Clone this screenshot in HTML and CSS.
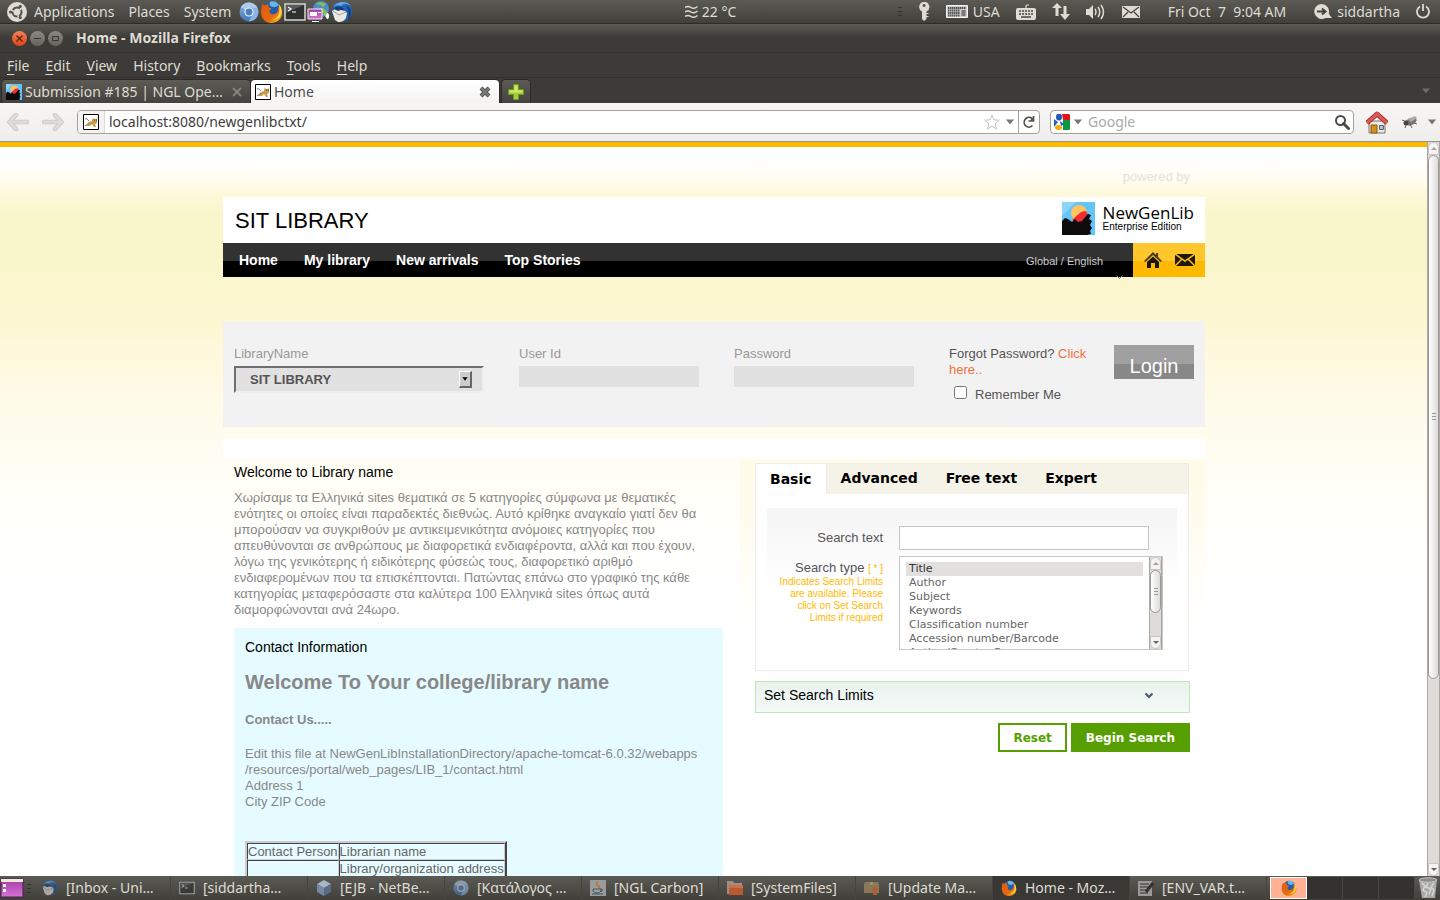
FILE: index.html
```html
<!DOCTYPE html>
<html lang="en">
<head>
	<meta charset="utf-8">
	<title>Home - Mozilla Firefox</title>
	<link rel="stylesheet" href="styles.css">
</head>
<body>

	<!-- icons used more than once -->
	<svg class="defs" aria-hidden="true">
		<defs>
			<linearGradient id="gBlue" x1="0" y1="0" x2="0" y2="1"><stop offset="0" stop-color="#8fb8e6"/><stop offset="1" stop-color="#3f73b4"/></linearGradient>
			<linearGradient id="gFox" x1="0" y1="0" x2="1" y2="1"><stop offset="0" stop-color="#e25a10"/><stop offset="0.6" stop-color="#e66a0c"/><stop offset="1" stop-color="#ffc928"/></linearGradient>
			<linearGradient id="gPurple" x1="0" y1="0" x2="0" y2="1"><stop offset="0" stop-color="#a43aa5"/><stop offset="1" stop-color="#d774d6"/></linearGradient>
		</defs>
		<symbol id="chromium" viewBox="0 0 20 20">
			<circle cx="10" cy="10" r="9.5" fill="url(#gBlue)"/>
			<path d="M10 10L1.8 5.2A9.5 9.5 0 0 1 18.6 6.2L10 5.6z" fill="#aecbee"/>
			<path d="M14 12.2L9.6 19.4A9.5 9.5 0 0 0 18.6 6.2H11z" fill="#8fb5e2"/>
			<circle cx="10" cy="10" r="4.6" fill="#e9f1fa"/>
			<circle cx="10" cy="10" r="3.4" fill="#4c7fc0"/>
		</symbol>
		<symbol id="firefox" viewBox="0 0 22 22">
			<circle cx="11.500" cy="9.500" r="8.500" fill="#1d5fae"/>
			<path d="M9 2c4-2 8 0 9 3l-4 2-4-1z" fill="#67b6ea"/>
			<path d="M3 3c0 1 .5 2 1 2.500C5.500 4 7 4 8.500 4.500 7.500 5.500 8 7 9 7.500l2 .5-2 2.500c0 3 3.500 4 6 2.500 2-1 3-4 2-7 3 2 4.500 5 4.200 7.500C20.500 19 16 22 11 22 5 22 1 17.500 1 12 1 8 1.500 5 3 3z" fill="url(#gFox)"/>
			<path d="M18 4c3 3 3.500 7 2 10-1 3-4 5-8 5 5-1 8-6 6-15z" fill="#ffd84a"/>
		</symbol>
		<symbol id="terminal" viewBox="0 0 22 18">
			<path d="M1 1h20v16H1z" fill="#2d3130" stroke="#d5d5d0" stroke-width="1.500"/>
			<path d="M2 2h18L2 10z" fill="#56595a"/>
			<path d="M4 4l3 2-3 2M8 9h4" fill="none" stroke="#fff" stroke-width="1.200"/>
		</symbol>
		<symbol id="thunderbird" viewBox="0 0 22 22">
			<circle cx="11" cy="10.500" r="10" fill="#2263b4"/>
			<path d="M2 6C6 0 16-1 20 5c-5-3-8-2-10 0-4-1-6 0-8 1z" fill="#62a6e4"/>
			<path d="M15 5c6 1 6 9 2 14 1-6 1-10-2-14z" fill="#123d7e"/>
			<path d="M1 10l5-3 6 1 4 4-1 5c-3 5-8 5-11 2z" fill="#ece8e2"/>
			<path d="M2 10l6 4 7-3" fill="none" stroke="#a49d94"/>
			<path d="M3 8c2-3 6-3 9-1l2 3-4-1-3 1z" fill="#193f77"/>
		</symbol>
		<symbol id="sunset" viewBox="0 0 33 33">
			<path d="M0 0h33v33H0z" fill="#62c4f8"/>
			<path d="M0 0h14L0 14z" fill="#8dd4fa"/>
			<circle cx="17" cy="11" r="8" fill="#fdc45f"/>
			<path d="M10 18l9-8 5-1 2 4-3 6c-4 2-9 2-13-1z" fill="#f22b35"/>
			<path d="M0 33V19l3-3 3 1 4 3 3-3 3 3 4-1 4-5 2-2 3 1-2 4 3 2-2 4 2 3-2 3 1 3-4 1z" fill="#0d0b0c"/>
		</symbol>
		<symbol id="tomcat" viewBox="0 0 16 16">
			<path d="M.5.5h15v15H.5z" fill="#fff" stroke="#000"/>
			<path d="M3 12l3-4 3-1 .5-3L11 5h2l1-1v5l-2 1 1 3h-2l-2-3-2 2z" fill="#c99b4a"/>
			<path d="M2 5c2-1 3 1 4 2M2 12l4-3" fill="none" stroke="#777"/>
			<path d="M11 6h1M13 6h1" stroke="#4d3510" fill="none"/>
		</symbol>
		<symbol id="down" viewBox="0 0 8 6"><path d="M0 .5h8L4 5.500z" fill="currentColor"/></symbol>
	</svg>

	<!-- desktop panel -->
	<header class="panel">
		<div class="panel-left">
			<svg width="20" height="20" viewBox="0 0 20 20"><circle cx="10" cy="10" r="10" fill="#dfdbd2"/><circle cx="10" cy="10" r="4.500" fill="none" stroke="#55534d" stroke-width="2" stroke-dasharray="7.900 1.500" stroke-dashoffset="3"/><g fill="#55534d"><circle cx="3.600" cy="10" r="1.600"/><circle cx="13.200" cy="4.400" r="1.600"/><circle cx="13.200" cy="15.600" r="1.600"/></g></svg>
			<nav class="panel-menu">
				<a href="#">Applications</a>
				<a href="#">Places</a>
				<a href="#">System</a>
			</nav>
			<div class="launchers">
				<svg width="20" height="20"><use href="#chromium"/></svg>
				<svg width="23" height="23"><use href="#firefox"/></svg>
				<svg width="22" height="18"><use href="#terminal"/></svg>
				<svg width="23" height="22" viewBox="0 0 23 22"><circle cx="14" cy="8" r="8" fill="#4d8dcc"/><path d="M9 3c4-3 8-1 10 0l-3 3-2-2zM11 8l5-1 4 4-2 4z" fill="#8fc04a"/><path d="M1 8h14v10H1z" fill="url(#gPurple)" stroke="#eee"/><path d="M3 11h7v4H3zM11 11h3v1h-3zM5 20h7v1H5z" fill="#fff"/><path d="M20 12l-2 3 2 3c2 0 2-2 2-3s0-3-2-3z" fill="#fff"/></svg>
				<svg width="22" height="22"><use href="#thunderbird"/></svg>
			</div>
		</div>
		<div class="weather">
			<svg width="13" height="13" viewBox="0 0 13 13"><path d="M0 2.500q3-2 6 0t6.500-1M0 7q3-2 6 0t6.500-1M0 11.500q3-2 6 0t6.500-1" fill="none" stroke="#dfdbd2" stroke-width="1.500"/></svg>
			22 °C
		</div>
		<div class="panel-right">
			<i class="grip"></i>
			<svg width="12" height="19" viewBox="0 0 12 19"><path d="M6 0a5 5 0 0 1 2.500 9.500V11h2v1h-2v2h2v1h-2v2L6 19l-2-2V9.500A5 5 0 0 1 6 0zm0 2a1.500 1.500 0 1 0 .1 0z" fill="#dfdbd2"/></svg>
			<span class="layout">
				<svg width="22" height="14" viewBox="0 0 22 14"><path d="M.5.5h21v12H.5z" fill="#ccc" stroke="#f4f4f2"/><path d="M2 3h18M2 5.500h12M2 8h12M2 10.500h12" stroke="#565656" stroke-width="2" stroke-dasharray="1.500 .5"/><path d="M15.500 5h4v6h-4z" fill="#777"/></svg>
				USA
			</span>
			<svg width="20" height="16" viewBox="0 0 20 16"><path d="M10 4V2q0-1 1.500-1H13" fill="none" stroke="#dfdbd2" stroke-width="1.200"/><rect y="4" width="20" height="12" rx="2" fill="#dfdbd2"/><path d="M3 7h14M3 10h14" stroke="#484743" stroke-width="1.600" stroke-dasharray="2 1"/><path d="M5 13h10" stroke="#484743" stroke-width="1.500"/></svg>
			<svg width="18" height="17" viewBox="0 0 18 17"><path d="M3.500 13V5H0l5-5 5 5H6.500v8zM11.500 3v8H8l5 6 5-6h-3.500V3z" fill="#dfdbd2"/></svg>
			<svg width="20" height="16" viewBox="0 0 20 16"><path d="M0 5h3l4-4v14l-4-4H0z" fill="#dfdbd2"/><path d="M9 5q2 3 0 6M12 3q3.500 5 0 10M15 1q5 7 0 14" fill="none" stroke="#dfdbd2" stroke-width="1.500"/></svg>
			<svg width="18" height="12" viewBox="0 0 18 12"><path d="M0 0h18v12H0z" fill="#dfdbd2"/><path d="M1 1l8 6 8-6M1 11l5-5M17 11l-5-5" fill="none" stroke="#44433f" stroke-width="1.300"/></svg>
			<time class="clock">Fri Oct  7  9:04 AM</time>
			<span class="user">
				<svg width="18" height="16" viewBox="0 0 18 16"><path d="M7.500 0a7.500 7.500 0 0 1 7.300 9.500q1 2 3.200 4.500h-6.500A7.500 7.500 0 1 1 7.500 0z" fill="#dfdbd2"/><path d="M3 7.500h8M8 4.500l3.500 3L8 10.500" fill="none" stroke="#44433f" stroke-width="2"/></svg>
				siddartha
			</span>
			<svg width="14" height="15" viewBox="0 0 14 15"><path d="M4 2.500a6 6 0 1 0 6 0M7 0v7" fill="none" stroke="#dfdbd2" stroke-width="1.800"/></svg>
		</div>
	</header>

	<!-- browser window -->
	<div class="titlebar">
		<button class="win close" aria-label="Close"><svg width="7" height="7" viewBox="0 0 7 7"><path d="M.5.5l6 6M6.500.5l-6 6" stroke="#5b2411" stroke-width="1.300"/></svg></button>
		<button class="win" aria-label="Minimize"><svg width="7" height="7" viewBox="0 0 7 7"><path d="M0 3.500h7" stroke="#35342f"/></svg></button>
		<button class="win" aria-label="Maximize"><svg width="7" height="7" viewBox="0 0 7 7"><path d="M.5 1.500h6v4h-6z" fill="none" stroke="#35342f"/></svg></button>
		<h1>Home - Mozilla Firefox</h1>
	</div>
	<nav class="menubar">
		<a href="#"><u>F</u>ile</a>
		<a href="#"><u>E</u>dit</a>
		<a href="#"><u>V</u>iew</a>
		<a href="#">Hi<u>s</u>tory</a>
		<a href="#"><u>B</u>ookmarks</a>
		<a href="#"><u>T</u>ools</a>
		<a href="#"><u>H</u>elp</a>
	</nav>
	<div class="tabs">
		<div class="tab">
			<svg width="16" height="16"><use href="#sunset"/></svg>
			<span>Submission #185 | NGL Ope…</span>
			<svg class="tab-x" width="10" height="10" viewBox="0 0 10 10"><path d="M1 1l8 8M9 1L1 9" stroke="#84827b" stroke-width="2"/></svg>
		</div>
		<div class="tab current">
			<svg width="16" height="16"><use href="#tomcat"/></svg>
			<span>Home</span>
			<svg class="tab-x" width="12" height="12" viewBox="0 0 12 12"><path d="M2 2l8 8M10 2l-8 8" stroke="#55544f" stroke-width="4"/><path d="M2 2l8 8M10 2l-8 8" stroke="#7d7c77" stroke-width="2"/></svg>
		</div>
		<button class="tab-new" aria-label="New tab"><svg width="16" height="16" viewBox="0 0 16 16"><path d="M5.500.5h5v5h5v5h-5v5h-5v-5h-5v-5h5z" fill="#a9cc3c" stroke="#6b9b1d"/><path d="M6.500 1.500h3v5h5v2h-13v-2h5z" fill="#d3e66c"/></svg></button>
		<svg class="tab-list" width="8" height="6"><use href="#down"/></svg>
	</div>
	<div class="toolbar">
		<button class="arrow" aria-label="Back"><svg width="22" height="18" viewBox="0 0 22 18"><path d="M9 2L2.500 9 9 16M3 9h17" fill="none" stroke="#c9c6c2" stroke-width="4.500" stroke-linecap="round" stroke-linejoin="round"/><path d="M9 2L2.500 9 9 16M3 9h17" fill="none" stroke="#dedbd8" stroke-width="3" stroke-linecap="round" stroke-linejoin="round"/></svg></button>
		<button class="arrow" aria-label="Forward"><svg width="22" height="18" viewBox="0 0 22 18"><path d="M13 2l6.500 7-6.500 7M19 9H2" fill="none" stroke="#c9c6c2" stroke-width="4.500" stroke-linecap="round" stroke-linejoin="round"/><path d="M13 2l6.500 7-6.500 7M19 9H2" fill="none" stroke="#dedbd8" stroke-width="3" stroke-linecap="round" stroke-linejoin="round"/></svg></button>
		<div class="urlbar">
			<span class="site"><svg width="16" height="16"><use href="#tomcat"/></svg></span>
			<input type="text" aria-label="Address" value="localhost:8080/newgenlibctxt/">
			<svg width="16" height="16" viewBox="0 0 16 16"><path d="M8 1l2 4.800 5.200.4-4 3.400L12.500 15 8 12.100 3.500 15l1.300-5.400-4-3.400 5.200-.4z" fill="#fff" stroke="#c4c3c0"/></svg>
			<svg width="8" height="6"><use href="#down"/></svg>
			<button class="reload" aria-label="Reload"><svg width="12" height="12" viewBox="0 0 12 12"><path d="M9.500 9.500A4.800 4.800 0 1 1 9 2.500M10.500 0v5H5.500M8 4.500l2-2" fill="none" stroke="#55534f" stroke-width="1.700"/></svg></button>
		</div>
		<div class="searchbar">
			<svg width="16" height="16" viewBox="0 0 16 16"><path d="M8 0h7l1 1v5H9z" fill="#e5141a"/><path d="M9 6h7v9l-1 1H9z" fill="#0b9a40"/><path d="M0 5l4 3-4 5z" fill="#2b5fc4"/><ellipse cx="5" cy="3" rx="3" ry="3.500" fill="#2357bf"/><path d="M6 7l4 3-3 2z" fill="#2357bf"/><ellipse cx="4.500" cy="13.500" rx="3.500" ry="2.500" fill="#f5ae0c"/></svg>
			<svg width="8" height="6"><use href="#down"/></svg>
			<input type="text" aria-label="Search the web" placeholder="Google">
			<svg width="15" height="15" viewBox="0 0 15 15"><circle cx="5.500" cy="5.500" r="4.500" fill="none" stroke="#4b4a47" stroke-width="2"/><path d="M8.500 8.500l5 5" stroke="#4b4a47" stroke-width="3" stroke-linecap="round"/></svg>
		</div>
		<svg class="home" width="22" height="23" viewBox="0 0 22 23"><path d="M3 10h16v12H3z" fill="#eceae6" stroke="#77756f"/><path d="M5 14h6v8H5z" fill="#d28f1e" stroke="#8a5a0c"/><path d="M13.500 14.500h4v4h-4z" fill="#a9bfd2" stroke="#666"/><path d="M1 12L11 3l10 9" fill="none" stroke="#b03335" stroke-width="5" stroke-linejoin="round"/><path d="M1 12L11 3l10 9" fill="none" stroke="#dc5a58" stroke-width="3"/></svg>
		<svg class="fly" width="16" height="14" viewBox="0 0 16 14"><ellipse cx="9" cy="6.500" rx="6" ry="3.500" transform="rotate(-25 9 6.500)" fill="#777"/><path d="M6 4l7-3 2 2-6 4z" fill="#aaa"/><circle cx="4" cy="8" r="2.500" fill="#444"/><path d="M3 6L0 5M4 10l-1 3M8 9l2 4M12 8l3 1" stroke="#666"/></svg>
		<svg width="8" height="6"><use href="#down"/></svg>
	</div>

	<div class="viewport">
		<main class="page">
			<div class="wrap">
				<p class="powered">powered by</p>
				<div class="masthead">
					<h2>SIT LIBRARY</h2>
					<div class="brand">
						<svg width="33" height="33"><use href="#sunset"/></svg>
						<div><strong>NewGenLib</strong><small>Enterprise Edition</small></div>
					</div>
				</div>
				<nav class="mainnav">
					<a href="#">Home</a>
					<a href="#">My library</a>
					<a href="#">New arrivals</a>
					<a href="#">Top Stories</a>
					<a class="lang" href="#">Global / English
						<svg width="7" height="4" viewBox="0 0 7 4"><path d="M.5.5l3 3 3-3" fill="none" stroke="#777"/></svg>
					</a>
					<div class="quick">
						<a href="#" aria-label="Home page"><svg width="18" height="16" viewBox="0 0 18 16"><path d="M9 0l3 3V1h2v4l4 4-1.500 1L9 3 1.500 10 0 9z" fill="#4a3a14"/><path d="M3 10l6-5.500L15 10v6h-4v-5H7v5H3z" fill="#1c1608"/></svg></a>
						<a href="#" aria-label="Mail"><svg width="20" height="12" viewBox="0 0 20 12"><path d="M0 0h20v12H0z" fill="#1d1707"/><path d="M0 0l10 7 10-7M0 12l7-7M20 12l-7-7" fill="none" stroke="#fdbe14" stroke-width="1.500"/></svg></a>
					</div>
				</nav>

				<form class="login">
					<div class="field library">
						<label for="library">LibraryName</label>
						<div class="select">
							<select id="library"><option>SIT LIBRARY</option></select>
							<i class="drop"><svg width="6" height="4"><use href="#down"/></svg></i>
						</div>
					</div>
					<div class="field">
						<label for="user">User Id</label>
						<input id="user" type="text">
					</div>
					<div class="field">
						<label for="pass">Password</label>
						<input id="pass" type="password">
					</div>
					<div class="forgot">
						<p>Forgot Password? <a href="#">Click here..</a></p>
						<div class="remember"><input id="remember" type="checkbox"><label for="remember">Remember Me</label></div>
					</div>
					<button type="button">Login</button>
				</form>

				<div class="strip"></div>

				<div class="columns">
					<section class="left">
						<h3>Welcome to Library name</h3>
						<p class="intro">Χωρίσαμε τα Ελληνικά sites θεματικά σε 5 κατηγορίες σύμφωνα με θεματικές ενότητες οι οποίες είναι παραδεκτές διεθνώς. Αυτό κρίθηκε αναγκαίο γιατί δεν θα μπορούσαν να συγκριθούν με αντικειμενικότητα ανόμοιες κατηγορίες που απευθύνονται σε ανθρώπους με διαφορετικά ενδιαφέροντα, αλλά και που έχουν, λόγω της γενικότερης ή ειδικότερης φύσεώς τους, διαφορετικό αριθμό ενδιαφερομένων που τα επισκέπτονται. Πατώντας επάνω στο γραφικό της κάθε κατηγορίας μεταφερόσαστε στα καλύτερα 100 Ελληνικά sites όπως αυτά διαμορφώνονται ανά 24ωρο.</p>
						<div class="contact">
							<h3>Contact Information</h3>
							<h2>Welcome To Your college/library name</h2>
							<h4>Contact Us.....</h4>
							<p>Edit this file at NewGenLibInstallationDirectory/apache-tomcat-6.0.32/webapps<br>/resources/portal/web_pages/LIB_1/contact.html<br>Address 1<br>City ZIP Code</p>
							<table>
								<tr><td>Contact Person</td><td>Librarian name</td></tr>
								<tr><td></td><td>Library/organization address</td></tr>
							</table>
						</div>
					</section>

					<section class="right">
						<div class="search-tabs">
							<a class="on" href="#">Basic</a>
							<a href="#">Advanced</a>
							<a href="#">Free text</a>
							<a href="#">Expert</a>
						</div>
						<form class="search-body">
							<div class="search-form">
								<label for="text">Search text</label>
								<input id="text" type="text">
								<div class="type-label">
									<label for="type">Search type</label> <small>[ * ]</small>
									<p>Indicates Search Limits are available. Please click on Set Search Limits if required</p>
								</div>
								<div class="listbox">
									<select id="type" size="8">
										<option selected>Title</option>
										<option>Author</option>
										<option>Subject</option>
										<option>Keywords</option>
										<option>Classification number</option>
										<option>Accession number/Barcode</option>
										<option>Author/Creator Resp</option>
									</select>
									<div class="scroll">
										<i class="up"></i>
										<div class="track"><div class="thumb"></div></div>
										<i class="dn"></i>
									</div>
								</div>
							</div>
						</form>
						<button class="limits" type="button">Set Search Limits
							<svg width="10" height="7" viewBox="0 0 10 7"><path d="M1.500 1.500L5 5l3.500-3.500" fill="none" stroke="#4d5567" stroke-width="2"/></svg>
						</button>
						<div class="actions">
							<button class="reset" type="reset">Reset</button>
							<button class="begin" type="button">Begin Search</button>
						</div>
					</section>
				</div>
			</div>
		</main>
		<div class="scroll main-scroll">
			<i class="up"></i>
			<div class="track"><div class="thumb"></div></div>
			<i class="dn"></i>
		</div>
	</div>

	<!-- window list -->
	<footer class="taskbar">
		<svg width="24" height="20" viewBox="0 0 24 20"><path d="M1 1h22v18H1z" fill="url(#gPurple)" stroke="#4a1f49"/><path d="M1 1h22v3H1z" fill="#f0ead6"/><path d="M3 6h3v3H3zM3 11h3v3H3z" fill="#fff"/></svg>
		<i class="grip"></i>
		<div class="tasks">
			<button><svg class="dim" width="16" height="16"><use href="#thunderbird"/></svg>[Inbox - Uni…</button>
			<button><svg class="dim" width="16" height="14"><use href="#terminal"/></svg>[siddartha…</button>
			<button><svg width="16" height="16" viewBox="0 0 16 16"><path d="M1 4l7-4 7 4-7 4z" fill="#a9b6c8"/><path d="M1 4l7 4v8l-7-4z" fill="#7688a3"/><path d="M15 4L8 8v8l7-4z" fill="#5a6a85"/></svg>[EJB - NetBe…</button>
			<button><svg class="dim" width="16" height="16"><use href="#chromium"/></svg>[Κατάλογος …</button>
			<button><svg width="16" height="16" viewBox="0 0 16 16"><path d="M0 0h16v16H0z" fill="#9a9c9c"/><path d="M8 2q-3 2 0 3.500T8 8" fill="none" stroke="#c46b2c" stroke-width="1.500"/><path d="M3 9h8v2q-1 2-4 2t-4-2zM2 14h11M11 9q3 0 0 3" fill="none" stroke="#405468"/></svg>[NGL Carbon]</button>
			<button><svg width="16" height="14" viewBox="0 0 16 14"><path d="M0 0h6l1 2h8v11H0z" fill="#9b8f87"/><path d="M2 4h14v10H2z" fill="#b9592f"/><path d="M2 4h14v3H2z" fill="#c8714a"/></svg>[SystemFiles]</button>
			<button><svg width="16" height="14" viewBox="0 0 16 14"><path d="M1 1h13l1 2v9H0V3z" fill="#8a7857"/><path d="M6 1h3v3H6z" fill="#a5956f"/><path d="M11 5l4 4h-2v5H9V9H7z" fill="#b05a3a"/></svg>[Update Ma…</button>
			<button class="active"><svg width="16" height="16"><use href="#firefox"/></svg>Home - Moz…</button>
			<button><svg width="16" height="16" viewBox="0 0 16 16"><path d="M0 1h14v15H0z" fill="#999"/><path d="M2 4h9M2 7h9M2 10h6M2 13h8" stroke="#55544f" stroke-width="1.500"/><path d="M15 3l-7 9" stroke="#33322f" stroke-width="3"/></svg>[ENV_VAR.t…</button>
		</div>
		<div class="pager">
			<span class="here"><svg width="16" height="16"><use href="#firefox"/></svg></span><span></span><span></span><span></span>
		</div>
		<svg width="20" height="22" viewBox="0 0 20 22"><path d="M1 3h18l-2 18H4z" fill="#a9aaa6"/><path d="M4 6l3 3-2 4 4 3-2 4M10 6l-2 4 5 2-2 5M16 6l-3 4 3 3-2 6" fill="none" stroke="#d6d7d4" stroke-width="1.500"/><ellipse cx="10" cy="3" rx="9" ry="2.200" fill="#8a8c88" stroke="#c8c9c6"/></svg>
	</footer>

</body>
</html>
```

FILE: styles.css
```css
* {
	box-sizing: border-box;
}
html, body {
	height: 100%;
}
body {
	margin: 0;
	display: flex;
	flex-direction: column;
	overflow: hidden;
	font-family: "Noto Sans", "Open Sans", sans-serif;
	font-size: 14px;
	line-height: 20px;
	color: #dfdbd2;
	background: #fff;
}
h1, h2, h3, h4, p {
	margin: 0;
}
a {
	color: inherit;
	text-decoration: none;
}
button, input, select {
	font: inherit;
	color: inherit;
	border: 0;
	border-radius: 0;
	padding: 0;
	margin: 0;
	background: none;
	outline: 0;
}
svg {
	display: block;
	flex: none;
}
.defs {
	position: absolute;
	width: 0;
	height: 0;
}

/* desktop panel */
.panel {
	flex: none;
	display: grid;
	grid-template-columns: 1fr auto 1fr;
	align-items: center;
	height: 24px;
	padding: 0 10px 0 7px;
	background: linear-gradient(#5c5a54, #403f3a);
	border-bottom: 1px solid #2c2b28;
	white-space: nowrap;
}
.panel-left, .panel-menu, .launchers, .weather, .panel-right, .layout, .user {
	display: flex;
	align-items: center;
}
.panel-menu {
	gap: 14px;
	margin: 0 8px 0 7px;
}
.launchers {
	gap: 1px;
}
.weather {
	gap: 4px;
	margin-right: 16px;
}
.panel-right {
	justify-content: flex-end;
	gap: 16px;
}
.layout, .user {
	gap: 5px;
}
.clock {
	white-space: pre;
	margin: 0 12px;
}
.grip {
	width: 4px;
	height: 9px;
	background: repeating-linear-gradient(#33322f 0 1px, transparent 1px 4px);
}

/* window frame */
.titlebar {
	flex: none;
	display: flex;
	align-items: center;
	gap: 3px;
	height: 29px;
	padding-left: 12px;
	background: linear-gradient(#5c5a54, #3c3b37 50%);
	border-bottom: 1px solid #373632;
}
.titlebar h1 {
	margin-left: 10px;
	font-size: 14px;
}
.win {
	display: grid;
	place-items: center;
	width: 15px;
	height: 15px;
	border-radius: 50%;
	background: linear-gradient(#8a8880, #65635c);
}
.win.close {
	background: linear-gradient(#f58158, #dc4413);
}
.menubar {
	flex: none;
	display: flex;
	align-items: center;
	gap: 16px;
	height: 25px;
	padding: 2px 0 0 7px;
	background: #3c3b37;
	border-bottom: 1px solid #32312e;
}
.menubar u {
	text-underline-offset: 3px;
}
.tabs {
	flex: none;
	display: flex;
	align-items: flex-end;
	gap: 1px;
	height: 25px;
	padding: 0 10px 0 2px;
	background: #3c3b37;
}
.tab {
	display: flex;
	align-items: center;
	gap: 3px;
	width: 248px;
	height: 23px;
	padding: 0 8px 0 4px;
	border-radius: 4px 4px 0 0;
	background: linear-gradient(#5c5b56, #43423e);
	box-shadow: 0 0 0 1px #2c2b28;
	white-space: nowrap;
}
.tab-x {
	margin-left: auto;
}
.tab.current {
	color: #4c4c4c;
	background: linear-gradient(#fff, #f4f3f2);
}
.tab-new {
	display: grid;
	place-items: center;
	width: 28px;
	height: 23px;
	margin-left: 2px;
	border-radius: 4px 4px 0 0;
	background: linear-gradient(#5c5b56, #43423e);
	box-shadow: 0 0 0 1px #2c2b28;
}
.tab-list {
	align-self: center;
	margin-left: auto;
	color: #6d6b66;
}
.toolbar {
	flex: none;
	display: flex;
	align-items: center;
	gap: 10px;
	height: 39px;
	padding: 0 4px 0 7px;
	color: #777;
	background: linear-gradient(#f7f6f5, #efeeed);
	border-bottom: 1px solid #979590;
}
.arrow {
	margin-right: 3px;
}
.urlbar, .searchbar {
	display: flex;
	align-items: center;
	height: 24px;
	border: 1px solid #a3a19c;
	border-radius: 4px;
	background: #fff;
	overflow: hidden;
}
.urlbar {
	flex: 1;
	gap: 6px;
}
.urlbar input {
	flex: 1;
	color: #3c3c3c;
}
.site {
	display: grid;
	place-items: center;
	width: 27px;
	height: 24px;
	margin-right: -2px;
	background: #f3f2f1;
	border-right: 1px solid #dcdad7;
}
.reload {
	display: grid;
	place-items: center;
	width: 21px;
	height: 22px;
	margin-left: -2px;
	border-left: 1px solid #a3a19c;
}
.searchbar {
	width: 304px;
	gap: 4px;
	padding: 0 3px;
}
.searchbar input {
	flex: 1;
	min-width: 0;
	margin-left: 2px;
}
.searchbar input::placeholder {
	color: #a9a9a9;
	opacity: 1;
}
.home {
	margin-left: 2px;
}
.fly {
	margin-left: 4px;
}

/* library page */
.viewport {
	flex: 1;
	min-height: 0;
	display: flex;
}
.page {
	flex: 1;
	overflow: hidden;
	padding-left: 1px;
	border-top: 5px solid #ffba00;
	font: 13px/16px "Liberation Sans", Arial, sans-serif;
	color: #888;
	background: linear-gradient(#fff 12px, #fffdf0 32px, #fdf8d8 50px, #faf6cc 66px, #faf6cc 120px, #fcf6d0 170px, #fff8dc 205px, #fffcec 270px, #fffef6 330px, #fff 430px);
}
.wrap {
	max-width: 982px;
	margin: 0 auto;
}
.powered {
	padding: 22px 15px 12px 0;
	text-align: right;
	color: #e2e2da;
}
.masthead {
	display: flex;
	justify-content: space-between;
	align-items: center;
	height: 46px;
	padding: 0 11px 0 12px;
	background: #fff;
	color: #000;
}
.masthead h2 {
	padding-top: 2px;
	font-size: 22px;
	line-height: 26px;
	font-weight: normal;
}
.brand {
	display: flex;
	align-items: center;
	gap: 8px;
	padding-bottom: 4px;
	font-family: "Open Sans", sans-serif;
}
.brand strong, .brand small {
	display: block;
}
.brand strong {
	font-size: 17px;
	line-height: 17px;
	font-weight: normal;
}
.brand small {
	font: 10px/12px "Liberation Sans", sans-serif;
}
.mainnav {
	display: flex;
	align-items: center;
	gap: 26px;
	height: 34px;
	padding-left: 16px;
	color: #fff;
	font-size: 14px;
	font-weight: bold;
	background: linear-gradient(#323232 18px, #000 18px);
}
.mainnav .lang {
	position: relative;
	margin-left: auto;
	margin-right: 4px;
	padding-top: 2px;
	font-size: 11px;
	font-weight: normal;
	color: #ccc;
}
.lang svg {
	position: absolute;
	right: -20px;
	top: 24px;
}
.quick {
	display: flex;
	align-items: center;
	justify-content: center;
	gap: 13px;
	width: 72px;
	height: 34px;
	background: linear-gradient(#ffc62e 18px, #ffb900 18px);
}
.login {
	display: flex;
	align-items: flex-start;
	height: 106px;
	margin-top: 44px;
	padding: 24px 11px;
	background: #f2f2f2;
}
.login .field {
	width: 215px;
	padding-top: 1px;
	color: #999;
}
.login .field.library {
	width: 285px;
}
.login label {
	display: block;
}
.login input[type="text"], .login input[type="password"] {
	display: block;
	width: 180px;
	height: 21px;
	margin-top: 4px;
	background: #e1e1e1;
}
.select {
	position: relative;
	width: 250px;
	margin-top: 4px;
}
.select select {
	display: block;
	appearance: none;
	width: 100%;
	height: 27px;
	padding-left: 14px;
	border: 2px solid;
	border-color: #6f6f6f #eee #eee #6f6f6f;
	background: #e1e1e1;
	font-weight: bold;
	color: #555;
}
.drop {
	position: absolute;
	right: 12px;
	top: 5px;
	display: grid;
	place-items: center;
	width: 13px;
	height: 17px;
	border: 1px solid;
	border-color: #fff #666 #666 #fff;
	border-right-width: 2px;
	border-bottom-width: 2px;
	background: #ccc;
	color: #000;
	pointer-events: none;
}
.forgot {
	width: 165px;
	padding: 1px 20px 0 0;
	color: #555;
}
.forgot a {
	color: #f37043;
}
.remember {
	display: flex;
	align-items: center;
	gap: 8px;
	margin-top: 8px;
}
.remember input {
	width: 13px;
	height: 13px;
	margin: 0 0 4px 5px;
}
.login button {
	width: 80px;
	height: 34px;
	padding-top: 8px;
	font-size: 20px;
	line-height: 24px;
	color: #fff;
	background: linear-gradient(#a0a0a0 19px, #888 19px);
}
.strip {
	height: 20px;
	margin-top: 12px;
	background: #fff;
}
.columns {
	display: grid;
	grid-template-columns: 517px 1fr;
}
.columns h3 {
	font-size: 14px;
	line-height: 18px;
	font-weight: normal;
	color: #000;
}
.left {
	padding: 4px 17px 0 11px;
}
.intro {
	padding: 9px 0 10px;
}
.contact {
	padding: 10px 11px;
	background: #e6fbff;
}
.contact h2 {
	margin: 14px 0;
	font-size: 20px;
	line-height: 24px;
}
.contact h4 {
	margin: 18px 0;
}
.contact table {
	margin-top: 31px;
	border: 2px solid;
	border-color: #ccc #444 #444 #ccc;
	border-spacing: 0;
	color: #666;
}
.contact td {
	padding: 0;
	height: 17px;
	line-height: 15px;
	border: 1px solid;
	border-color: #444 #ccc #ccc #444;
}
.right {
	padding: 4px 15px;
	background: linear-gradient(#fffbe6, #fff 170px);
}
.search-tabs {
	display: flex;
	height: 31px;
	margin-right: 1px;
	border: 1px solid #ececec;
	border-bottom: 0;
	background: #f5f3e7;
	font: bold 14px/28px "DejaVu Sans", sans-serif;
	color: #000;
}
.search-tabs a {
	padding: 0 14px;
}
.search-tabs a.on {
	line-height: 31px;
	background: #fff;
	border-right: 1px solid #ececec;
}
.search-body {
	margin-right: 1px;
	padding: 14px 11px 20px;
	border: 1px solid #ececec;
	border-top: 0;
	background: #fff;
}
.search-form {
	display: grid;
	grid-template-columns: 116px 1fr;
	column-gap: 16px;
	row-gap: 6px;
	padding-top: 18px;
	background: linear-gradient(#f5f5f5, #fff 80px);
	color: #555;
}
.search-form > label {
	line-height: 24px;
	text-align: right;
}
.search-form input {
	width: 250px;
	height: 24px;
	border: 1px solid #c6c6c6;
	background: #fff;
}
.type-label {
	padding-top: 4px;
	text-align: right;
}
.type-label small, .type-label p {
	font-size: 10px;
	line-height: 12px;
	color: #ffb900;
}
.type-label p {
	padding-left: 8px;
}
.listbox {
	display: flex;
	width: 264px;
	height: 94px;
	border: 1px solid #c6c6c6;
	background: #fff;
	overflow: hidden;
}
.listbox select {
	flex: 1;
	height: 120px;
	padding: 5px 6px;
	overflow: hidden;
	scrollbar-width: none;
	font: 11px/14px "DejaVu Sans", sans-serif;
	color: #666;
}
.listbox option {
	min-height: 14px;
	height: 14px;
	padding: 0 3px;
}
.listbox option:checked {
	color: #333;
	background: #e1e0df linear-gradient(#e1e0df, #e1e0df);
}

/* scrollbars */
.scroll {
	flex: none;
	display: flex;
	flex-direction: column;
	width: 13px;
	border: 1px solid #aaa7a3;
	border-width: 0 1px;
	background: #dedbd8;
}
.scroll i {
	display: grid;
	place-items: center;
	height: 13px;
	border-radius: 6px 6px 0 0;
	border: 1px solid #c9c6c3;
	background: #f4f3f2;
}
.scroll .dn {
	border-radius: 0 0 6px 6px;
}
.scroll i::after {
	content: "";
	border: 3px solid transparent;
}
.scroll .up::after {
	border-top: 0;
	border-bottom-color: #a5a29f;
}
.scroll .dn::after {
	border-bottom: 0;
	border-top-color: #65635f;
}
.track {
	flex: 1;
	min-height: 0;
}
.thumb {
	display: grid;
	place-items: center;
	height: 65%;
	border: 1px solid #9c9a96;
	border-radius: 6px;
	background: linear-gradient(90deg, #fff, #dedcda);
}
.thumb::after {
	content: "";
	width: 4px;
	height: 7px;
	background: repeating-linear-gradient(#999 0 1px, transparent 1px 3px);
}
.main-scroll .thumb {
	height: 74%;
}

.limits {
	display: flex;
	align-items: center;
	justify-content: space-between;
	width: 100%;
	height: 32px;
	margin-top: 10px;
	padding: 0 35px 4px 8px;
	border: 1px solid #bde8b6;
	background: linear-gradient(#e8f2ec, #f5f9f9);
	font-size: 14px;
	color: #000;
}
.actions {
	display: flex;
	justify-content: flex-end;
	gap: 4px;
	margin-top: 10px;
}
.actions button {
	height: 29px;
	border: 2px solid #579f00;
	padding: 0 13px;
	font: bold 12px/24px "DejaVu Sans", sans-serif;
	color: #579f00;
}
.actions .begin {
	background: #579f00;
	color: #fff;
}

/* window list */
.taskbar {
	flex: none;
	display: flex;
	align-items: center;
	height: 24px;
	padding-right: 2px;
	background: linear-gradient(#5c5a54, #403f3a);
}
.taskbar .grip {
	margin: 0 3px;
}
.tasks {
	flex: 1;
	display: flex;
	min-width: 0;
}
.tasks button {
	flex: 1 1 0;
	min-width: 0;
	display: flex;
	align-items: center;
	gap: 8px;
	height: 24px;
	padding-left: 8px;
	border-right: 1px solid #45443f;
	white-space: nowrap;
	overflow: hidden;
}
.tasks .active {
	background: #393834;
}
.dim {
	opacity: 0.6;
}
.pager {
	display: flex;
	width: 145px;
	height: 22px;
	margin: 0 3px;
	background: #33322f;
}
.pager span {
	flex: 1;
	display: grid;
	place-items: center;
	border-right: 1px solid #4a4945;
}
.pager .here {
	border: 1px solid #fff;
	background: #ffb193;
}
```
